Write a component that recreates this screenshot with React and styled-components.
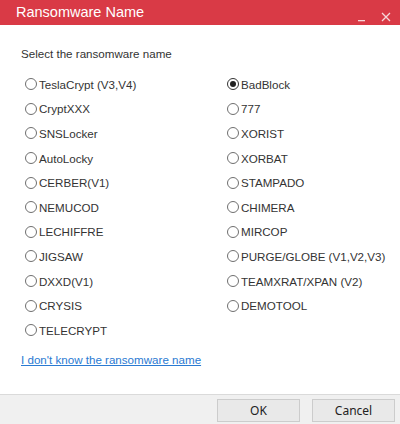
import React from 'react';
import styled, { createGlobalStyle, css } from 'styled-components';

const GlobalStyle = createGlobalStyle`
  html, body {
    margin: 0;
    padding: 0;
    background: #ffffff;
  }
`;

const Window = styled.div`
  width: 400px;
  height: 424px;
  display: flex;
  flex-direction: column;
  background: #ffffff;
  font-family: "Liberation Sans", Arial, sans-serif;
  color: #333333;
  overflow: hidden;
`;

const TitleBar = styled.div`
  height: 25px;
  flex: 0 0 25px;
  display: flex;
  align-items: center;
  justify-content: space-between;
  padding: 0 9px 0 16px;
  background: #d93a46;
  color: #ffffff;
`;

const Title = styled.div`
  font-size: 14.5px;
  line-height: 25px;
`;

const TitleButtons = styled.div`
  display: flex;
  align-items: center;
  gap: 14px;
`;

const TitleButton = styled.span`
  display: block;
  width: 10px;
  height: 10px;
  color: #f6d6d9;
`;

const Content = styled.div`
  padding: 22px 0 0 21px;
  display: flex;
  flex-direction: column;
`;

const Prompt = styled.div`
  font-size: 11.6px;
  line-height: 14px;
  margin-bottom: 11px;
`;

const OptionGrid = styled.div`
  display: grid;
  grid-auto-flow: column;
  grid-template-rows: repeat(11, 24.6px);
  grid-template-columns: 202px 1fr;
  padding-left: 4px;
`;

const Option = styled.label`
  display: flex;
  align-items: center;
  gap: 2px;
  font-size: 11.6px;
  color: #333333;
  white-space: nowrap;
`;

const Radio = styled.span`
  box-sizing: border-box;
  width: 12px;
  height: 12px;
  flex: 0 0 12px;
  border: 1px solid #6f6f6f;
  border-radius: 50%;
  position: relative;

  ${props => props.$checked && css`
    border-color: #333333;
    &::after {
      content: '';
      position: absolute;
      left: 2px;
      top: 2px;
      width: 6px;
      height: 6px;
      border-radius: 50%;
      background: #222222;
    }
  `}
`;

const Link = styled.a`
  margin-top: 10px;
  font-size: 11.6px;
  line-height: 14px;
  color: #2a7ad2;
  text-decoration: underline;
  align-self: flex-start;
  cursor: pointer;
`;

const Footer = styled.div`
  margin-top: auto;
  height: 30px;
  flex: 0 0 30px;
  box-sizing: border-box;
  border-top: 1px solid #dadada;
  background: #f0f0f0;
  display: flex;
  justify-content: flex-end;
  align-items: flex-start;
  padding: 4px 5px 0 0;
  gap: 12px;
`;

const Button = styled.button`
  width: 83px;
  height: 23px;
  box-sizing: border-box;
  border: 1px solid #cccccc;
  background: #e9e9e9;
  font-family: "Noto Sans", "Open Sans", sans-serif;
  font-size: 12px;
  color: #222222;
  padding: 0;
`;

const leftOptions = [
  'TeslaCrypt (V3,V4)', 'CryptXXX', 'SNSLocker', 'AutoLocky', 'CERBER(V1)',
  'NEMUCOD', 'LECHIFFRE', 'JIGSAW', 'DXXD(V1)', 'CRYSIS', 'TELECRYPT',
];

const rightOptions = [
  'BadBlock', '777', 'XORIST', 'XORBAT', 'STAMPADO', 'CHIMERA', 'MIRCOP',
  'PURGE/GLOBE (V1,V2,V3)', 'TEAMXRAT/XPAN (V2)', 'DEMOTOOL',
];

const App = () => {
  const selected = 'BadBlock';
  return (
    <Window>
      <GlobalStyle />
      <TitleBar>
        <Title>Ransomware Name</Title>
        <TitleButtons>
          <TitleButton>
            <svg width="10" height="10" viewBox="0 0 10 10">
              <rect x="1" y="8" width="7" height="1.3" fill="currentColor" />
            </svg>
          </TitleButton>
          <TitleButton>
            <svg width="10" height="10" viewBox="0 0 10 10">
              <path d="M1 1 L9 9 M9 1 L1 9" stroke="currentColor" strokeWidth="1.3" />
            </svg>
          </TitleButton>
        </TitleButtons>
      </TitleBar>
      <Content>
        <Prompt>Select the ransomware name</Prompt>
        <OptionGrid>
          {[...leftOptions, ...rightOptions].map(name => (
            <Option key={name}>
              <Radio $checked={name === selected} />
              {name}
            </Option>
          ))}
        </OptionGrid>
        <Link>I don't know the ransomware name</Link>
      </Content>
      <Footer>
        <Button>OK</Button>
        <Button>Cancel</Button>
      </Footer>
    </Window>
  );
};

export default App;
